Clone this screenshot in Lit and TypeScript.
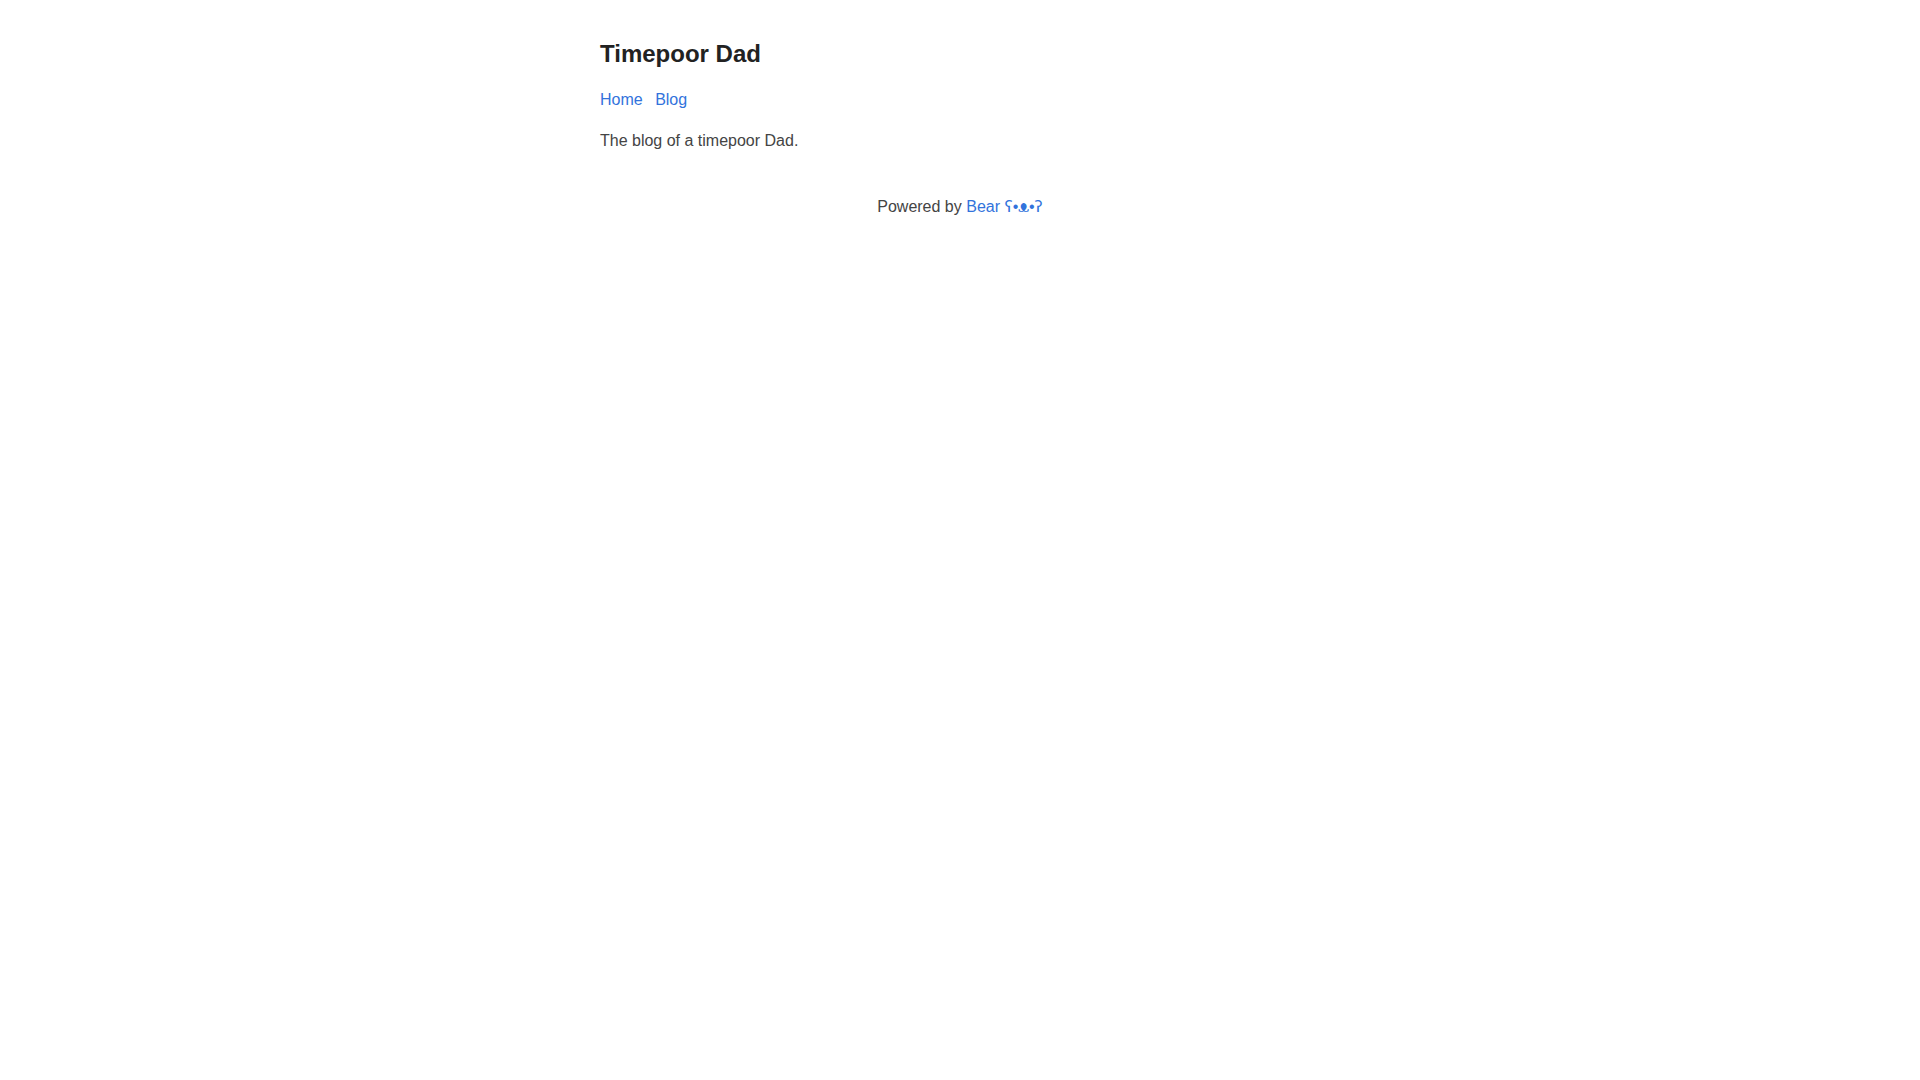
import { LitElement, html, css } from "lit";
import { customElement } from "lit/decorators.js";

@customElement("app-root")
export class AppRoot extends LitElement {
  static styles = css`
    :host {
      display: block;
      max-width: 720px;
      margin: 0 auto;
      padding: 20px;
      background: #fff;
      color: #444;
      font-family: "Liberation Sans", Arial, sans-serif;
      font-size: 16px;
      line-height: 24px;
      overflow-wrap: break-word;
    }
    a {
      color: #3273dc;
      text-decoration: none;
    }
    .title {
      display: block;
      color: #222;
    }
    .title h1 {
      margin: 20px 0;
      font-size: 24px;
      line-height: 28px;
    }
    .menu a {
      margin-right: 8px;
    }
    .content p {
      margin: 17px 0;
    }
    .footer {
      padding: 25px 0;
      text-align: center;
    }
    .ear {
      font-family: "DejaVu Sans", sans-serif;
    }
    .muzzle {
      font-family: "DejaVu Serif Condensed", "DejaVu Serif", serif;
    }
  `;

  render() {
    return html`
      <header>
        <a class="title" href="/"><h1>Timepoor Dad</h1></a>
        <nav class="menu"><a href="/">Home</a> <a href="/blog/">Blog</a></nav>
      </header>
      <main class="content"><p>The blog of a timepoor Dad.</p></main>
      <footer class="footer">Powered by <a href="https://bearblog.dev">Bear <span class="ear">ʕ</span>•<span class="muzzle">ᴥ</span>•<span class="ear">ʔ</span></a></footer>
    `;
  }
}
